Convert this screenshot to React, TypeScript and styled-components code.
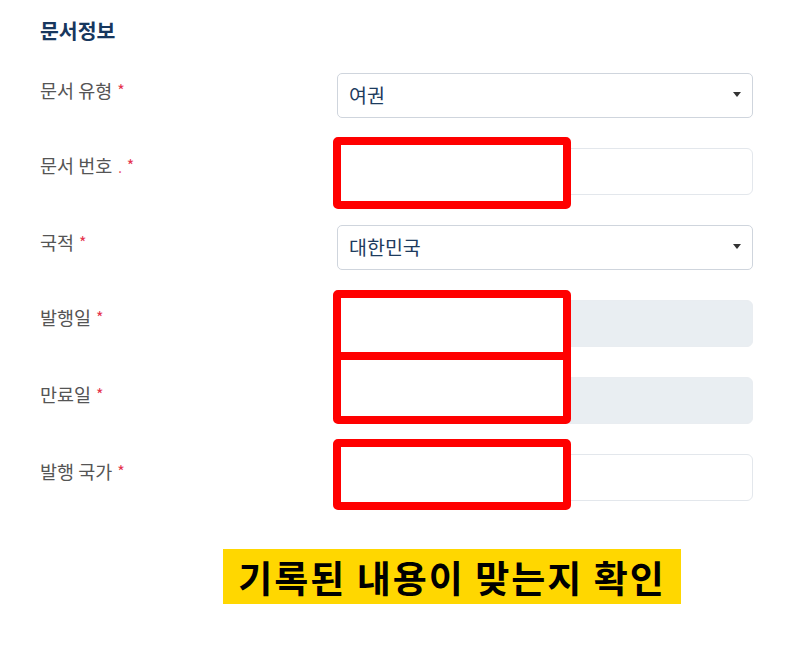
import styled, { createGlobalStyle } from 'styled-components';

const GlobalStyle = createGlobalStyle`
    html, body {
        margin: 0;
        padding: 0;
        background: #fff;
    }
    body {
        font-family: "Noto Sans CJK KR", "Noto Sans", sans-serif;
    }
`;

type Field = {
    label: string;
    dot?: boolean;
    kind: 'select' | 'input' | 'disabled';
    value?: string;
    mark?: { top: number; height: number };
};

const fields: Field[] = [
    { label: '문서 유형', kind: 'select', value: '여권' },
    { label: '문서 번호', dot: true, kind: 'input', mark: { top: -11, height: 72 } },
    { label: '국적', kind: 'select', value: '대한민국' },
    { label: '발행일', kind: 'disabled', mark: { top: -10, height: 71 } },
    { label: '만료일', kind: 'disabled', mark: { top: -25, height: 72 } },
    { label: '발행 국가', kind: 'input', mark: { top: -15, height: 71 } },
];

export default function App() {
    return (
        <Page>
            <GlobalStyle />
            <Title>문서정보</Title>
            <Form>
                {fields.map((f) => (
                    <Row key={f.label}>
                        <Label>
                            {f.label}
                            {f.dot && <Dot>.</Dot>}
                            <Star>*</Star>
                        </Label>
                        <FieldBox>
                            {f.kind === 'select' ? (
                                <Select>
                                    <span>{f.value}</span>
                                    <Caret />
                                </Select>
                            ) : (
                                <Input $disabled={f.kind === 'disabled'} />
                            )}
                            {f.mark && (
                                <Mark style={{ top: f.mark.top, height: f.mark.height }} />
                            )}
                        </FieldBox>
                    </Row>
                ))}
            </Form>
            <Banner>기록된 내용이 맞는지 확인</Banner>
        </Page>
    );
}

const Page = styled.div`
    width: 811px;
    height: 650px;
    box-sizing: border-box;
    padding: 17px 58px 0 40px;
    display: flex;
    flex-direction: column;
`;

const Title = styled.h2`
    margin: 0;
    font-size: 20.5px;
    line-height: 27px;
    font-weight: 700;
    color: #17375e;
`;

const Form = styled.div`
    display: flex;
    flex-direction: column;
    gap: 30px;
    margin-top: 29px;
`;

const Row = styled.div`
    display: grid;
    grid-template-columns: 297px 1fr;
    align-items: start;
`;

const Label = styled.div`
    padding-top: 4px;
    font-size: 18.5px;
    line-height: 26px;
    color: #555;
`;

const Dot = styled.span`
    color: #e5344e;
    font-size: 13px;
    margin-left: 6px;
`;

const Star = styled.span`
    color: #e5344e;
    font-size: 16px;
    margin-left: 5px;
    position: relative;
    top: -1px;
`;

const FieldBox = styled.div`
    position: relative;
`;

const Select = styled.div`
    height: 45px;
    box-sizing: border-box;
    border: 1px solid #cfd5dd;
    border-radius: 5px;
    display: flex;
    align-items: center;
    justify-content: space-between;
    padding: 0 11px 2px 11px;
    font-size: 19.5px;
    color: #1d3b5e;
    background: #fff;
`;

const Caret = styled.span`
    width: 0;
    height: 0;
    border-left: 4.5px solid transparent;
    border-right: 4.5px solid transparent;
    border-top: 5px solid #333;
`;

const Input = styled.div<{ $disabled?: boolean }>`
    height: 47px;
    box-sizing: border-box;
    border: 1px solid ${({ $disabled }) => ($disabled ? '#e9edf1' : '#e3e7ec')};
    border-radius: 6px;
    background: ${({ $disabled }) => ($disabled ? '#e9eef2' : '#fff')};
`;

const Mark = styled.div`
    position: absolute;
    left: -4px;
    width: 238px;
    box-sizing: border-box;
    border: 8px solid #ff0000;
    border-radius: 5px;
    background: #fff;
`;

const Banner = styled.div`
    align-self: flex-start;
    margin: 48px 0 0 183px;
    width: 458px;
    height: 55px;
    box-sizing: border-box;
    background: #ffd700;
    display: flex;
    align-items: center;
    justify-content: center;
    font-size: 37px;
    font-weight: 700;
    color: #000;
    letter-spacing: 2px;
    white-space: nowrap;
`;
